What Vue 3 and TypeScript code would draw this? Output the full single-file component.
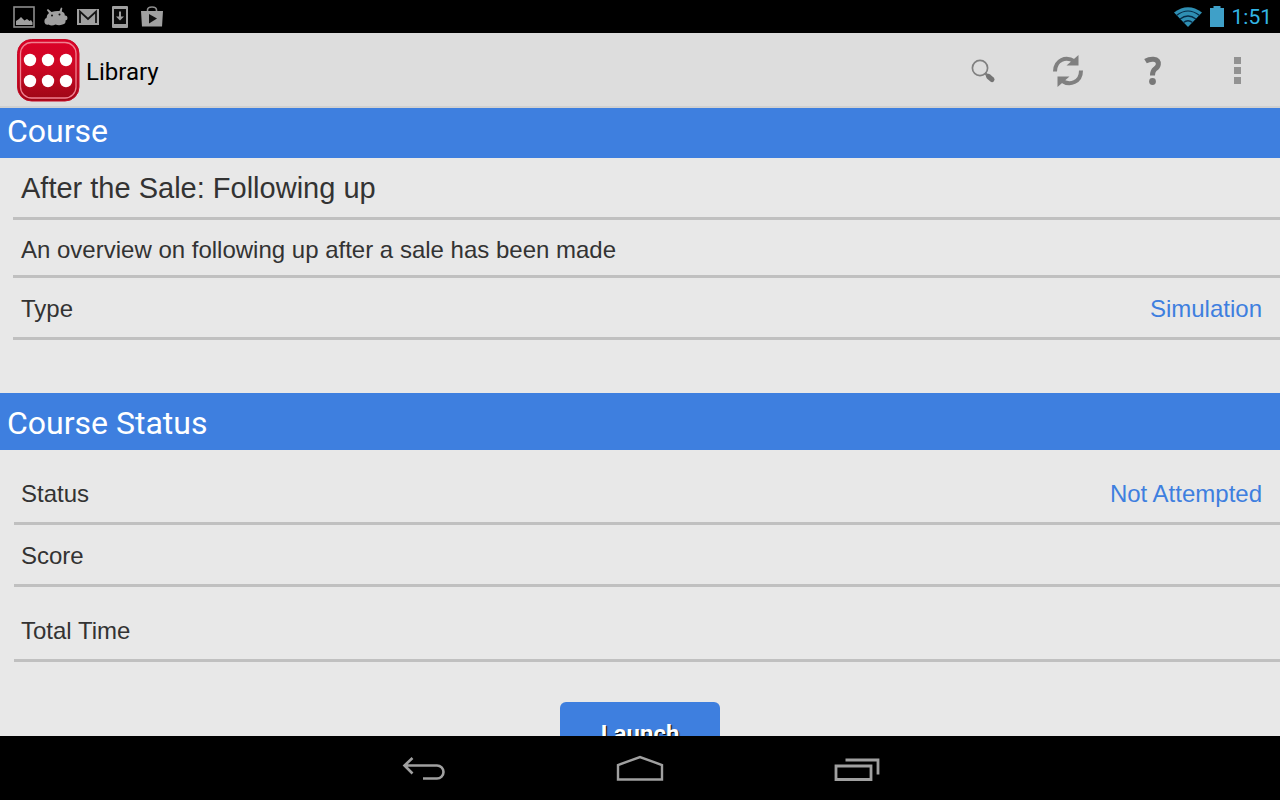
<script setup lang="ts">
interface Row {
  label: string
  value?: string
  kind: string
}

const courseRows: Row[] = [
  { label: 'After the Sale: Following up', kind: 'title' },
  { label: 'An overview on following up after a sale has been made', kind: 'summary' },
  { label: 'Type', value: 'Simulation', kind: 'type' },
]

const statusRows: Row[] = [
  { label: 'Status', value: 'Not Attempted', kind: 'status' },
  { label: 'Score', value: '', kind: 'score' },
  { label: 'Total Time', value: '', kind: 'time' },
]

const dots = [22, 43].flatMap((y) => [14, 32, 50].map((x) => ({ x, y })))
</script>

<template>
  <div class="screen">
    <div class="system-bar">
      <div class="notices">
        <svg width="22" height="22" viewBox="0 0 22 22" aria-hidden="true">
          <rect x="1" y="1" width="20" height="20" fill="none" stroke="#8c8c8c" stroke-width="1.6" />
          <path d="M3 19V15l3-2 2-2 3.500 3.500 2.500-1.500 2.500 2 1.500-1 1.500 2.500V19Z" fill="#a0a0a0" />
        </svg>
        <svg width="24" height="22" viewBox="0 0 24 22" aria-hidden="true">
          <path d="M4 3 7.500 6Q12 4.500 15.500 5L17 1.500 18.300 2 17.800 5.500Q21 6.500 20.800 9.500 23.500 9 23.500 12 23.500 14 21.500 14.500 22 18 18.500 18.500 15 19.800 11.500 18.500 7.500 20.500 4.500 18.500 1.500 19.500 0.500 16.500 0 12.500 2.500 12 2.500 8.800 5 7L2.800 4Z" fill="#a0a0a0" />
          <circle cx="8" cy="9.500" r="1" fill="#111" /><circle cx="15.500" cy="8.500" r="1" fill="#111" />
        </svg>
        <svg width="22" height="22" viewBox="0 0 22 22" aria-hidden="true">
          <path d="M0 3H22V19H0Z" fill="#a0a0a0" />
          <path d="M3 17V5.500L11 13 19 5.500V17" fill="none" stroke="#151515" stroke-width="1.800" />
        </svg>
        <svg width="24" height="22" viewBox="-4 0 24 22" aria-hidden="true">
          <rect x="0" y="0" width="16" height="22" rx="1" fill="#a0a0a0" />
          <rect x="2" y="3" width="12" height="15" fill="#0b0b0b" />
          <path d="M7 5.500h2v5h3l-4 4-4-4h3Z" fill="#a0a0a0" />
        </svg>
        <svg width="22" height="22" viewBox="0 0 22 22" aria-hidden="true">
          <path d="M6.500 6V4Q6.500 1 11 1T15.500 4V6" fill="none" stroke="#8c8c8c" stroke-width="1.600" />
          <path d="M0 5H22L21 20.500H1Z" fill="#a0a0a0" />
          <path d="M8 8 16 12.500 8 17.500Z" fill="#111" />
        </svg>
      </div>
      <div class="indicators">
        <svg width="28" height="20" viewBox="0 0 28 20" aria-hidden="true">
          <path d="M0 5.500Q14-5 28 5.500L14 20Z" fill="#2f8fb3" />
          <path d="M2.500 8.500Q14-.5 25.500 8.500" fill="none" stroke="#062a45" stroke-width="1.200" />
          <path d="M6 12Q14 6 22 12" fill="none" stroke="#062a45" stroke-width="1.300" />
          <path d="M9.500 15.500Q14 12 18.500 15.500" fill="none" stroke="#062a45" stroke-width="1.300" />
        </svg>
        <svg width="14" height="21" viewBox="0 0 14 21" aria-hidden="true">
          <path d="M3.500 0h7v2H14V21H0V2H3.500Z" fill="#3fa0c8" />
        </svg>
        <time class="clock">1:51</time>
      </div>
    </div>

    <header class="action-bar">
      <svg class="logo" width="64" height="64" viewBox="0 0 64 64" aria-hidden="true">
        <defs>
          <linearGradient id="tile" x1="0" y1="0" x2="0" y2="1">
            <stop offset="0" stop-color="#dc0028" />
            <stop offset="0.450" stop-color="#cc0824" />
            <stop offset="1" stop-color="#9c0716" />
          </linearGradient>
        </defs>
        <rect x="1.500" y="1.500" width="61.500" height="61.500" rx="14" fill="url(#tile)" stroke="#c80a26" stroke-width="1" />
        <rect x="4.500" y="4.500" width="55.500" height="55.500" rx="11" fill="none" stroke="#f08090" stroke-width="1.300" />
        <circle v-for="dot in dots" :key="`${dot.x}-${dot.y}`" :cx="dot.x" :cy="dot.y" r="6.200" fill="#fff" />
      </svg>
      <h1>Library</h1>
      <div class="actions">
        <button type="button" aria-label="Search">
          <svg width="26" height="26" viewBox="0 0 26 26">
            <circle cx="10" cy="10" r="7.600" fill="none" stroke="#808080" stroke-width="1.700" />
            <path d="m15 15 4 4" stroke="#808080" stroke-width="2.500" />
            <path d="m18.500 18.500 3.500 3" stroke="#747474" stroke-width="5" stroke-linecap="round" />
          </svg>
        </button>
        <button type="button" aria-label="Refresh">
          <svg width="32" height="32" viewBox="0 0 32 32">
            <g id="refresh-arrow">
              <path d="M3 16.500C3 5 14 .5 22.500 6.500" fill="none" stroke="#808080" stroke-width="4" />
              <path d="M26.500 0V10.500H14.500Z" fill="#808080" />
            </g>
            <use href="#refresh-arrow" transform="rotate(180 16 16)" />
          </svg>
        </button>
        <button type="button" aria-label="Help">
          <svg width="20" height="30" viewBox="0 0 20 30">
            <path d="M2.500 5.200Q6.500 2.800 10.500 3.200 15.800 3.800 15.300 8.500 15 11 12 13 9.500 14.800 9.500 19.500" fill="none" stroke="#787878" stroke-width="5" />
            <circle cx="9.500" cy="25.500" r="3.400" fill="#787878" />
          </svg>
        </button>
        <button type="button" aria-label="More options">
          <svg width="8" height="28" viewBox="0 0 8 28">
            <path d="M0 0h7v7h-7ZM0 10h7v7h-7ZM0 20h7v7h-7Z" fill="#929292" />
          </svg>
        </button>
      </div>
    </header>

    <main>
      <section>
        <h2>Course</h2>
        <dl class="course">
          <div v-for="row in courseRows" :key="row.kind" class="row" :class="row.kind">
            <dt>{{ row.label }}</dt>
            <dd v-if="row.value">{{ row.value }}</dd>
          </div>
        </dl>
      </section>
      <section>
        <h2 class="tall">Course Status</h2>
        <dl class="progress">
          <div v-for="row in statusRows" :key="row.kind" class="row" :class="row.kind">
            <dt>{{ row.label }}</dt>
            <dd>{{ row.value }}</dd>
          </div>
        </dl>
      </section>
      <button type="button" class="launch">Launch</button>
    </main>

    <nav class="nav-bar" aria-label="System">
      <button type="button" aria-label="Back">
        <svg width="48" height="30" viewBox="0 0 48 30">
          <path d="M5 12.500H38a6.500 6.500 0 0 1 0 13H24M13.500 5 5.500 12.500 13.500 20.500" fill="none" stroke="#a0a0a0" stroke-width="2.600" />
        </svg>
      </button>
      <button type="button" aria-label="Home">
        <svg width="48" height="30" viewBox="0 0 48 30">
          <path d="M2 26.500V12L24 4 46 12V26.500Z" fill="none" stroke="#a0a0a0" stroke-width="2.400" />
        </svg>
      </button>
      <button type="button" aria-label="Recent apps">
        <svg width="48" height="30" viewBox="0 0 48 30">
          <path d="M3 13H38V26.500H3ZM12.500 7H45V21.500" fill="none" stroke="#a0a0a0" stroke-width="2.800" />
        </svg>
      </button>
    </nav>
  </div>
</template>

<style>
body {
  margin: 0;
}
</style>

<style scoped>
.screen {
  display: flex;
  flex-direction: column;
  height: 100vh;
  overflow: hidden;
  background: #e8e8e8;
  color: #333;
  font-family: "Liberation Sans", Arial, sans-serif;
}

svg {
  display: block;
  flex: none;
}

button {
  padding: 0;
  border: 0;
  background: none;
  cursor: pointer;
}

.system-bar {
  display: flex;
  flex: none;
  align-items: center;
  justify-content: space-between;
  box-sizing: border-box;
  height: 33px;
  padding: 0 8px 0 13px;
  background: #000;
}

.notices {
  display: flex;
  align-items: center;
  gap: 9px;
}

.indicators {
  display: flex;
  align-items: center;
  gap: 8px;
}

.clock {
  padding-top: 2px;
  color: #33b5e5;
  font: 21px/31px Roboto, sans-serif;
}

.action-bar {
  display: flex;
  flex: none;
  align-items: center;
  box-sizing: border-box;
  height: 75px;
  padding: 1px 0 0 16px;
  border-bottom: 2px solid #d0d0d0;
  background: #ddd;
}

.action-bar h1 {
  margin: 0 0 0 6px;
  padding-top: 4px;
  color: #000;
  font: 24px/32px Roboto, sans-serif;
}

.actions {
  display: flex;
  margin-left: auto;
  padding-top: 2px;
}

.actions button {
  display: flex;
  align-items: center;
  justify-content: center;
  width: 85px;
  height: 70px;
}

main {
  flex: 1;
  min-height: 0;
  overflow: hidden;
}

h2 {
  margin: 0;
  padding: 0 7px 4px;
  background: #3e7fdf;
  color: #fff;
  font: 32px/46px Roboto, sans-serif;
}

h2.tall {
  padding: 7px 7px 4px;
}

dl {
  margin: 0 0 40px 14px;
}

dl.course {
  margin: 0 0 53px 13px;
}

.row {
  display: flex;
  align-items: center;
  justify-content: space-between;
  padding: 15px 18px 12px 8px;
  border-bottom: 3px solid #c0c0c0;
  font-size: 24px;
  line-height: 32px;
}

.progress .row {
  padding-left: 7px;
}

.row.title {
  padding-top: 14px;
  padding-bottom: 13px;
  font-size: 29px;
}

.row.summary {
  padding-top: 14px;
  padding-bottom: 9px;
}

.row.status,
.row.time {
  padding-top: 28px;
}

dd {
  margin: 0;
  color: #3e7fdf;
}

.launch {
  display: block;
  width: 160px;
  height: 64px;
  margin: 0 auto;
  border-radius: 6px;
  background: #3e7fdf;
  color: #fff;
  font: bold 24px/64px Roboto, sans-serif;
  text-shadow: 1px 1px 1px #000;
}

.nav-bar {
  display: flex;
  flex: none;
  align-items: center;
  justify-content: center;
  gap: 169px;
  height: 64px;
  background: #000;
}
</style>
